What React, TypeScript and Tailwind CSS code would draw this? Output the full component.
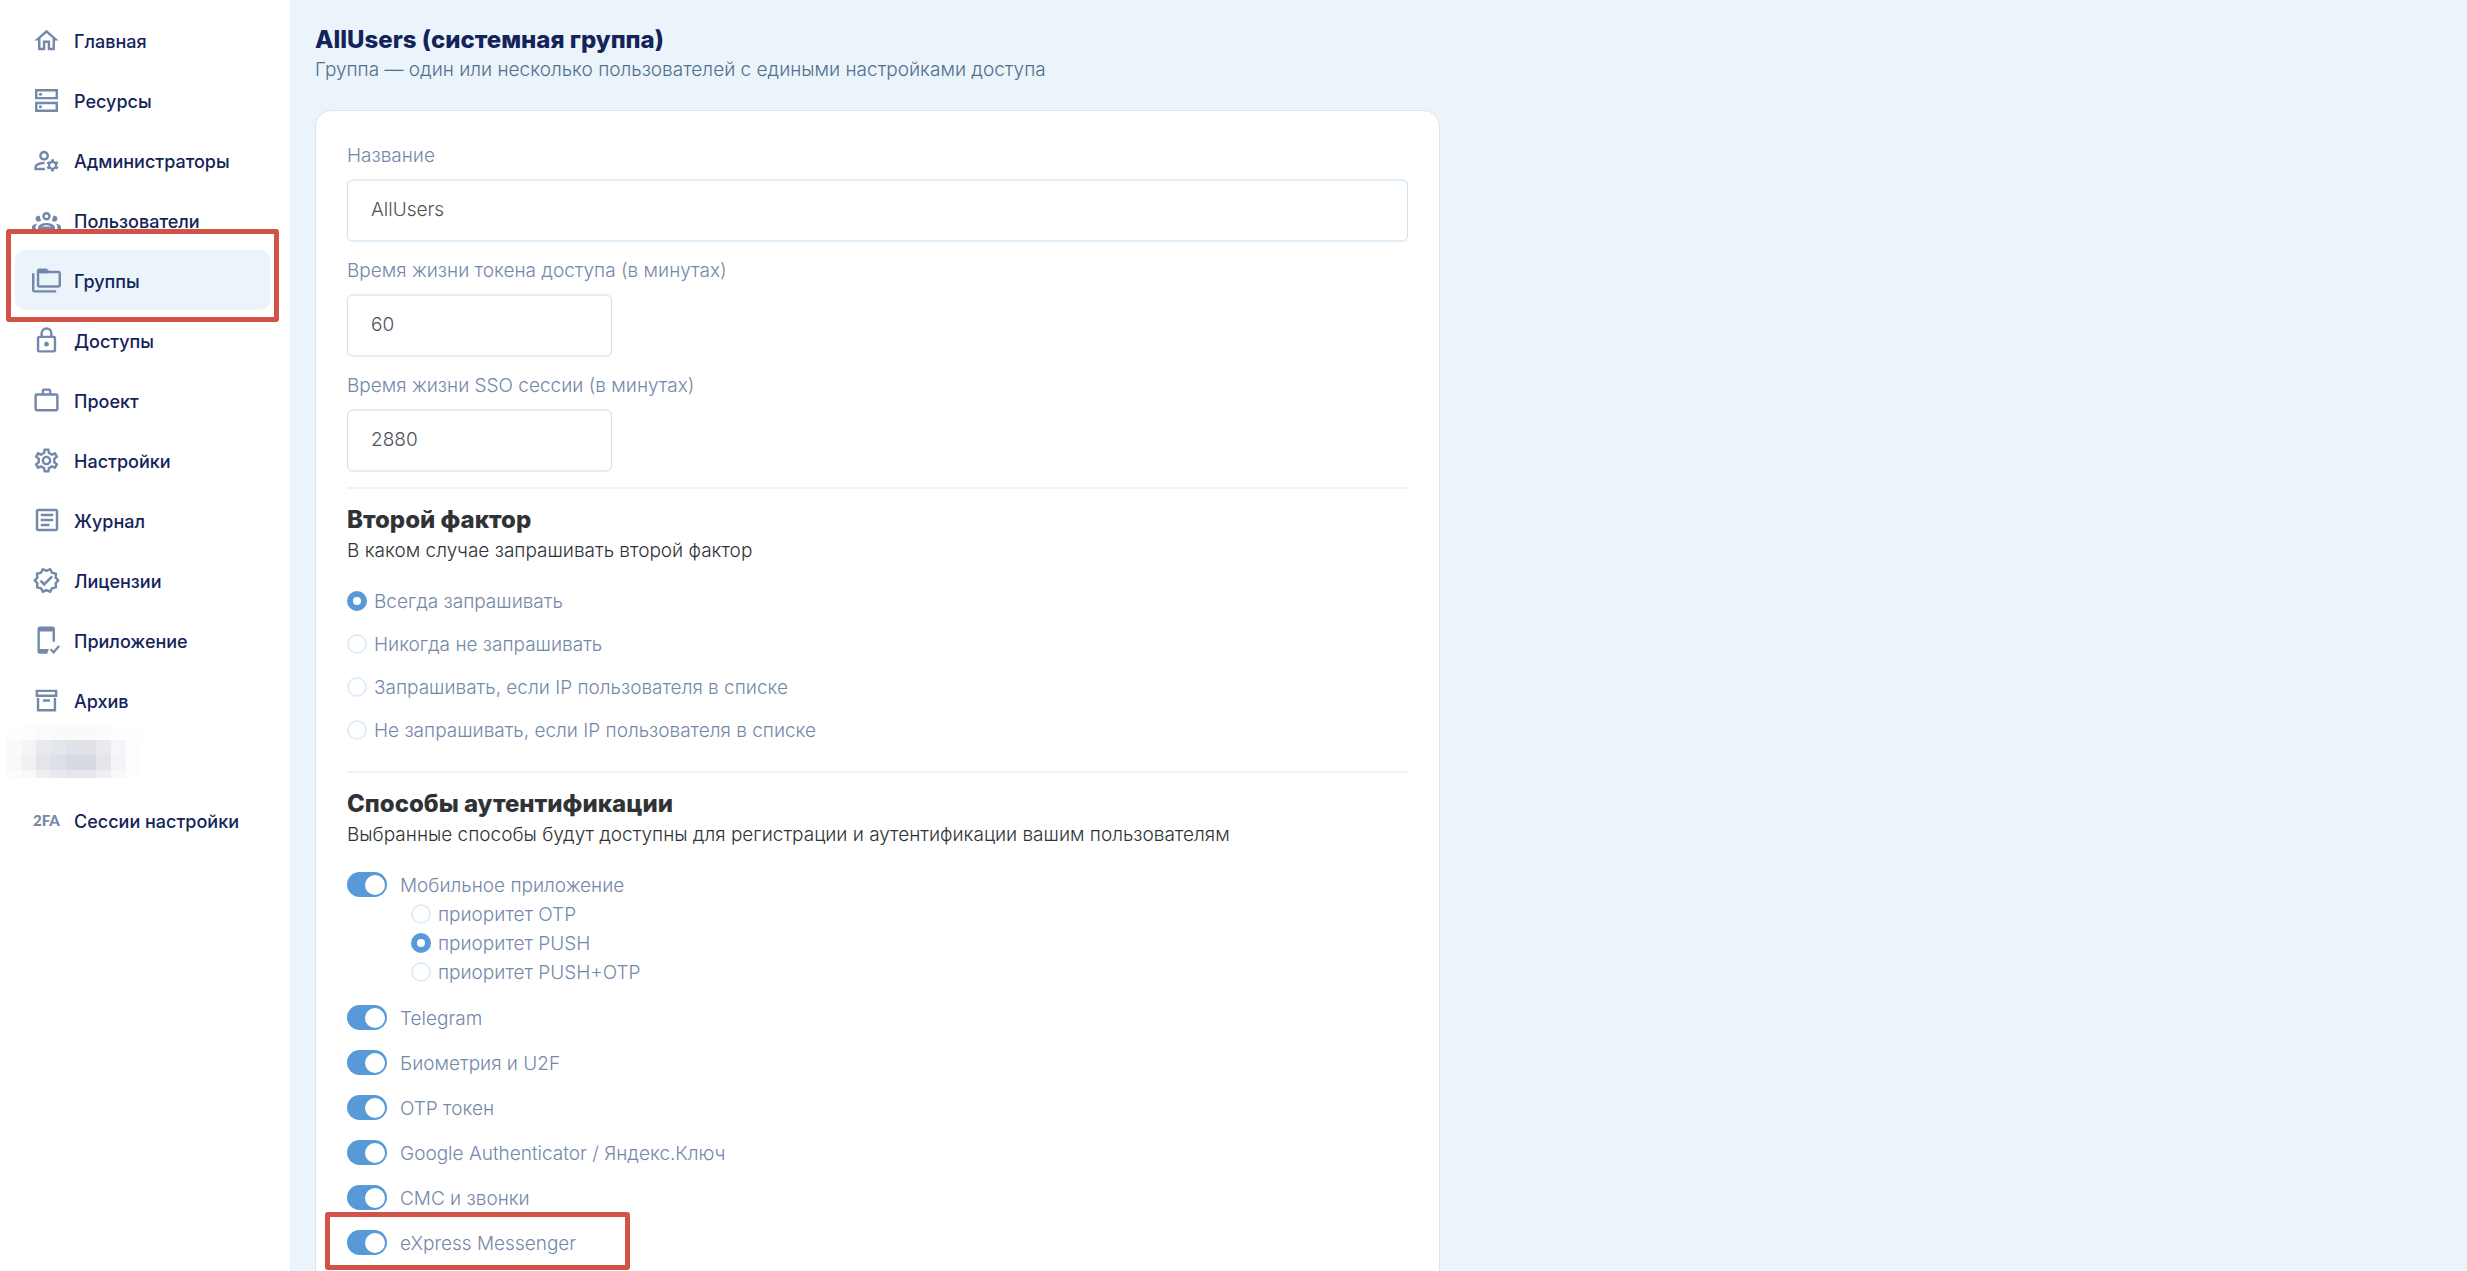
import { useState, type ReactNode } from "react";
import { MdOutlineManageAccounts, MdOutlineSettings, MdOutlineArticle, MdOutlineVerified } from "react-icons/md";

function Svg({ children }: { children: ReactNode }) {
  return (
    <svg viewBox="0 0 24 24" className="size-[29px]" fill="currentColor" aria-hidden="true">
      {children}
    </svg>
  );
}

const nav: { label: string; icon: ReactNode; active?: boolean }[] = [
  {
    label: "Главная",
    icon: (
      <Svg>
        <path d="M12 5.69 17 10.19V18h-2v-6H9v6H7v-7.81l5-4.5M12 3 2 12h3v8h6v-6h2v6h6v-8h3" />
      </Svg>
    ),
  },
  {
    label: "Ресурсы",
    icon: (
      <Svg>
        <path fillRule="evenodd" d="M2.500 2.500h19v8.500h-19zM4.500 4.500v4.500h15V4.500zM2.500 13h19v8.500h-19zM4.500 15v4.500h15V15z" />
        <circle cx="7" cy="6.800" r="1.300" />
        <circle cx="7" cy="17.200" r="1.300" />
      </Svg>
    ),
  },
  { label: "Администраторы", icon: <MdOutlineManageAccounts className="size-[29px]" /> },
  {
    label: "Пользователи",
    icon: (
      <Svg>
        <path d="M12,5A3.5,3.5 0 0,0 8.5,8.5A3.5,3.5 0 0,0 12,12A3.5,3.5 0 0,0 15.5,8.5A3.5,3.5 0 0,0 12,5M12,7A1.5,1.5 0 0,1 13.5,8.5A1.5,1.5 0 0,1 12,10A1.5,1.5 0 0,1 10.5,8.5A1.5,1.5 0 0,1 12,7M5.5,8A2.5,2.5 0 0,0 3,10.5C3,11.44 3.53,12.25 4.29,12.68C4.65,12.88 5.06,13 5.5,13C5.94,13 6.35,12.88 6.71,12.68C7.08,12.47 7.39,12.17 7.62,11.81C6.89,10.86 6.5,9.7 6.5,8.5C6.5,8.41 6.5,8.31 6.5,8.22C6.2,8.08 5.86,8 5.5,8M18.5,8C18.14,8 17.8,8.08 17.5,8.22C17.5,8.31 17.5,8.41 17.5,8.5C17.5,9.7 17.11,10.86 16.38,11.81C16.5,12 16.63,12.15 16.78,12.3C16.94,12.45 17.1,12.58 17.29,12.68C17.65,12.88 18.06,13 18.5,13C18.94,13 19.35,12.88 19.71,12.68C20.47,12.25 21,11.44 21,10.5A2.5,2.5 0 0,0 18.5,8M12,14C9.66,14 5,15.17 5,17.5V19H19V17.5C19,15.17 14.34,14 12,14M4.71,14.55C2.78,14.78 0,15.76 0,17.5V19H3V17.07C3,16.06 3.69,15.22 4.71,14.55M19.29,14.55C20.31,15.22 21,16.06 21,17.07V19H24V17.5C24,15.76 21.22,14.78 19.29,14.55M12,16C13.53,16 15.24,16.5 16.23,17H7.77C8.76,16.5 10.47,16 12,16Z" />
      </Svg>
    ),
  },
  {
    label: "Группы",
    active: true,
    icon: (
      <Svg>
        <path d="M22 4h-8l-2-2H6a2 2 0 0 0-2 2v12a2 2 0 0 0 2 2h16a2 2 0 0 0 2-2V6a2 2 0 0 0-2-2m0 12H6V6h16M2 6H0v14a2 2 0 0 0 2 2h18v-2H2V6Z" />
        <path d="M6 3h6l2 2v1H6z" />
      </Svg>
    ),
  },
  {
    label: "Доступы",
    icon: (
      <Svg>
        <path d="M12 17a2 2 0 1 1 0-4 2 2 0 0 1 0 4m6 3V10H6v10h12m0-12a2 2 0 0 1 2 2v10a2 2 0 0 1-2 2H6a2 2 0 0 1-2-2V10c0-1.11.89-2 2-2h1V6a5 5 0 0 1 10 0v2h1m-6-5a3 3 0 0 0-3 3v2h6V6a3 3 0 0 0-3-3Z" />
      </Svg>
    ),
  },
  {
    label: "Проект",
    icon: (
      <Svg>
        <path d="M20 6a2 2 0 0 1 2 2v11a2 2 0 0 1-2 2H4a2 2 0 0 1-2-2V8a2 2 0 0 1 2-2h4V4a2 2 0 0 1 2-2h4a2 2 0 0 1 2 2v2h4M4 8v11h16V8H4m10-2V4h-4v2h4Z" />
      </Svg>
    ),
  },
  { label: "Настройки", icon: <MdOutlineSettings className="size-[29px]" /> },
  { label: "Журнал", icon: <MdOutlineArticle className="size-[30px]" /> },
  { label: "Лицензии", icon: <MdOutlineVerified className="size-[29px]" /> },
  {
    label: "Приложение",
    icon: (
      <Svg>
        <path d="M6.500 0.500h10.500a2 2 0 0 1 2 2V13h-2V4.500H6.500V19H14l-1.500 4h-6a2 2 0 0 1-2-2V2.500a2 2 0 0 1 2-2Z" />
        <path d="m15.300 19.300 2.500 2.500 4.700-5.200" fill="none" stroke="currentColor" strokeWidth="1.800" />
      </Svg>
    ),
  },
  {
    label: "Архив",
    icon: (
      <Svg>
        <path d="M20 21H4V10h2v9h12v-9h2v11M3 3h18v6H3V3m6.500 8h5c.28 0 .5.22.5.5V13H9v-1.500c0-.28.22-.5.5-.5M5 5v2h14V5H5Z" />
      </Svg>
    ),
  },
];

const sessions = {
  label: "Сессии настройки",
  icon: (
    <span aria-hidden="true" className="font-['Lato',sans-serif] text-[15px] leading-none font-black">
      2FA
    </span>
  ),
};

function NavItem({ label, icon, active }: { label: string; icon: ReactNode; active?: boolean }) {
  return (
    <li className="relative">
      <a
        href="#"
        aria-current={active ? "page" : undefined}
        className={
          "flex h-[60px] items-center gap-3 rounded-[10px] pl-4 text-lg font-medium text-[#14245a] " +
          (active ? "bg-[#ebf4fb]" : "")
        }
      >
        <span className="flex w-[31px] shrink-0 items-center justify-center text-[#7488aa]">{icon}</span>
        <span className="pt-[3px]">{label}</span>
      </a>
      {active && (
        <div className="pointer-events-none absolute -inset-x-[9px] -top-[21px] -bottom-3 z-10 rounded-[3px] border-[5px] border-[#d15347]" />
      )}
    </li>
  );
}

const mosaic = [
  "bg-[#fefefe]", "bg-[#fdfdfd]", "bg-[#fbfbfb]", "bg-[#fafafa]", "bg-[#fafafa]", "bg-[#fafafa]", "bg-[#fcfcfc]", "bg-[#fefefe]", "bg-[#fefefe]",
  "bg-[#fafafa]", "bg-[#f4f5f8]", "bg-[#e9eaee]", "bg-[#e3e6eb]", "bg-[#dfe2e8]", "bg-[#e1e2e8]", "bg-[#e9eaee]", "bg-[#f5f6f9]", "bg-[#fdfdfe]",
  "bg-[#f9f9f9]", "bg-[#f0f1f2]", "bg-[#e4e5eb]", "bg-[#dce0ea]", "bg-[#d7dae4]", "bg-[#d7dae4]", "bg-[#e5e5ea]", "bg-[#f3f4f7]", "bg-[#fcfdfd]",
  "bg-[#fcfcfc]", "bg-[#f9f9fb]", "bg-[#eeeef1]", "bg-[#e8e9ec]", "bg-[#e6e7ea]", "bg-[#e6e7e9]", "bg-[#edeef1]", "bg-[#f9f9fb]", "bg-[#fdfdfd]",
];

function Radio({ name, label, checked, onSelect }: { name: string; label: string; checked: boolean; onSelect: () => void }) {
  return (
    <label className="flex items-center gap-[7px] text-[19px] leading-[29px] text-[#7488aa]">
      <input
        type="radio"
        name={name}
        checked={checked}
        onChange={onSelect}
        className="mb-[2px] size-5 shrink-0 appearance-none rounded-full border-2 border-[#e0eefa] bg-white checked:border-[6px] checked:border-[#5899d8]"
      />
      {label}
    </label>
  );
}

function Toggle({ label }: { label: string }) {
  const [on, setOn] = useState(true);
  return (
    <label className="flex items-center gap-[13px] text-[19px] leading-[29px] text-[#7488aa]">
      <input
        type="checkbox"
        role="switch"
        checked={on}
        onChange={(e) => setOn(e.target.checked)}
        className="mb-[2px] flex h-[25px] w-10 shrink-0 appearance-none items-center rounded-full bg-[#c8d5e3] px-[2px] before:size-5 before:rounded-full before:bg-white checked:justify-end checked:bg-[#5899d8]"
      />
      {label}
    </label>
  );
}

function Field({ id, label, value, narrow }: { id: string; label: string; value: string; narrow?: boolean }) {
  return (
    <div>
      <label htmlFor={id} className="block text-[19px] leading-7 text-[#7488aa]">
        {label}
      </label>
      <input
        id={id}
        type="text"
        defaultValue={value}
        className={
          "mt-[9px] block h-[63px] max-w-full rounded-md border-2 border-x border-[#e0eefa] border-x-[#cfe0f0] px-[23px] pb-[2px] text-[19px] text-[#4d545c] " +
          (narrow ? "w-[265px]" : "w-full")
        }
      />
    </div>
  );
}

const factors = [
  "Всегда запрашивать",
  "Никогда не запрашивать",
  "Запрашивать, если IP пользователя в списке",
  "Не запрашивать, если IP пользователя в списке",
];
const priorities = ["приоритет OTP", "приоритет PUSH", "приоритет PUSH+OTP"];
const methods = ["Telegram", "Биометрия и U2F", "OTP токен", "Google Authenticator / Яндекс.Ключ", "СМС и звонки", "eXpress Messenger"];

function SectionHead({ title, text }: { title: string; text: string }) {
  return (
    <div className="text-[#2f3336]">
      <h2 className="text-2xl leading-8 font-extrabold">{title}</h2>
      <p className="text-[19px] leading-[30px]">{text}</p>
    </div>
  );
}

export default function App() {
  const [factor, setFactor] = useState(factors[0]);
  const [priority, setPriority] = useState(priorities[1]);
  return (
    <div className="flex h-screen overflow-hidden bg-[#ebf4fb] font-['Inter','Liberation_Sans',sans-serif] font-[350]">
      <nav className="w-[290px] shrink-0 bg-white pt-[10px] pr-5 pl-[15px]">
        <ul>
          {nav.map((item) => (
            <NavItem key={item.label} {...item} />
          ))}
          <li className="relative h-[60px]" aria-hidden="true">
            <div className="absolute -top-[5px] -left-[9px] grid h-[53px] grid-cols-[repeat(9,15px)] grid-rows-[15px_15px_15px_8px]">
              {mosaic.map((c, i) => (
                <span key={i} className={c} />
              ))}
            </div>
          </li>
          <NavItem {...sessions} />
        </ul>
      </nav>

      <main className="min-w-0 flex-1 px-[25px] pt-[25px]">
        <h1 className="text-2xl leading-[30px] font-extrabold text-[#14245a]">AllUsers (системная группа)</h1>
        <p className="text-[19px] leading-[30px] text-[#516f8c]">
          Группа — один или несколько пользователей с едиными настройками доступа
        </p>

        <section className="mt-[25px] h-[1300px] w-full max-w-[1125px] rounded-2xl border border-[#dfe4e8] bg-white px-[31px] pt-[31px]">
          <div className="flex flex-col gap-[15px] border-b-2 border-[#f0f1f3] pb-[15px]">
            <Field id="name" label="Название" value="AllUsers" />
            <Field id="token" label="Время жизни токена доступа (в минутах)" value="60" narrow />
            <Field id="sso" label="Время жизни SSO сессии (в минутах)" value="2880" narrow />
          </div>

          <div className="border-b-2 border-[#f0f1f3] pt-[15px] pb-[26px]">
            <SectionHead title="Второй фактор" text="В каком случае запрашивать второй фактор" />
            <div role="radiogroup" className="mt-[21px] flex flex-col gap-[14px]">
              {factors.map((f) => (
                <Radio key={f} name="factor" label={f} checked={factor === f} onSelect={() => setFactor(f)} />
              ))}
            </div>
          </div>

          <div className="pt-[15px]">
            <SectionHead title="Способы аутентификации" text="Выбранные способы будут доступны для регистрации и аутентификации вашим пользователям" />
            <div className="mt-[21px]">
              <Toggle label="Мобильное приложение" />
              <div role="radiogroup" className="mb-[17px] ml-16">
                {priorities.map((p) => (
                  <Radio key={p} name="priority" label={p} checked={priority === p} onSelect={() => setPriority(p)} />
                ))}
              </div>
              <div className="flex flex-col gap-4">
                {methods.map((m, i) =>
                  i === methods.length - 1 ? (
                    <div key={m} className="relative w-max">
                      <Toggle label={m} />
                      <div className="pointer-events-none absolute -top-[17px] -right-[54px] -bottom-3 -left-[22px] rounded-[3px] border-[5px] border-[#d15347]" />
                    </div>
                  ) : (
                    <Toggle key={m} label={m} />
                  ),
                )}
              </div>
            </div>
          </div>
        </section>
      </main>
    </div>
  );
}
